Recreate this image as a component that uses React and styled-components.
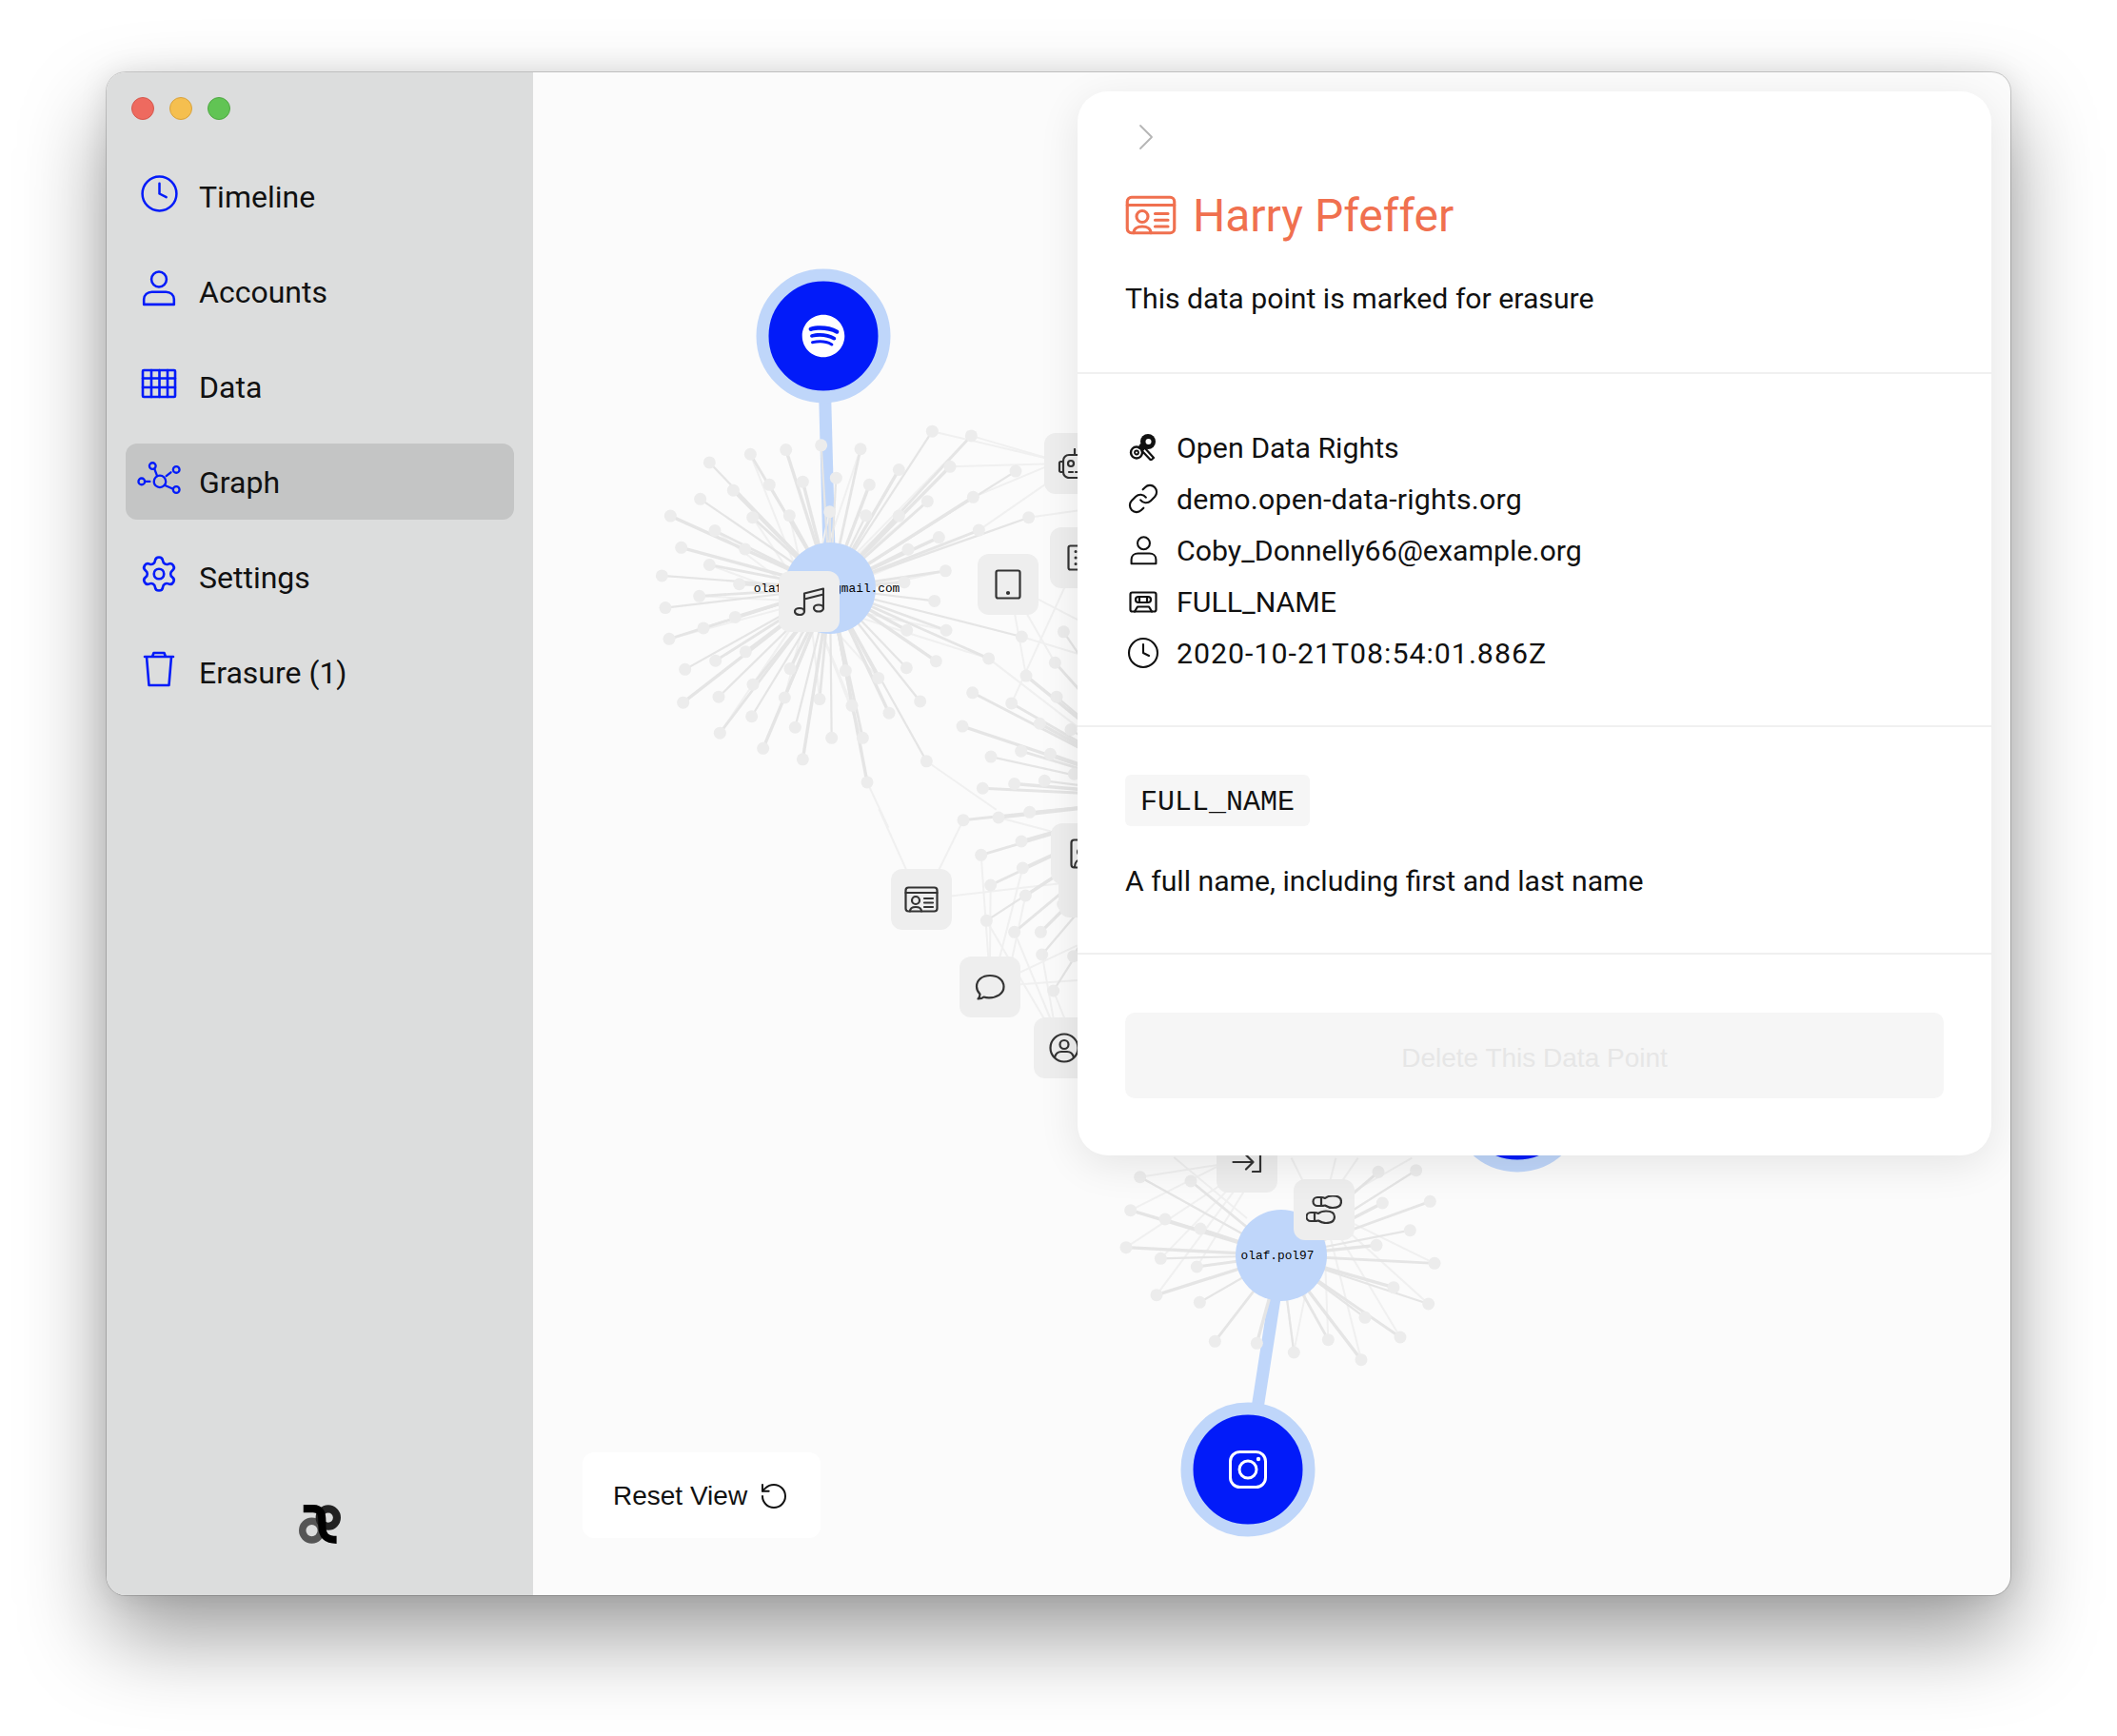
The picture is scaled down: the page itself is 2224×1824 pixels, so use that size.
import React from "react";
import styled, { createGlobalStyle } from "styled-components";
import { Settings, Link, RotateCcw, Clock } from "lucide-react";
import { FaSpotify } from "react-icons/fa";

const GlobalStyle = createGlobalStyle`
  html, body { margin: 0; padding: 0; background: #fff; }
  body { font-family: Roboto, "Noto Sans", Arial, sans-serif; color: #111; }
`;

const BLUE = "#021bf9";
const LIGHT = "#bfd6fa";

// the zoomed crops I read the graph from, converted back to page coords
const z2 = ([x, y]) => [660 + x / 3, 250 + y / 2.53];
const z5 = ([x, y]) => [900 + x / 3, 850 + y / 3];
const z6 = ([x, y]) => [1150 + x / 3, 1190 + y / 3];

const CENTER_A = [872, 618];
const CENTER_B = [1346, 1319];
const CENTER_C = [1235, 838];
const SPOTIFY = [865, 353];
const INSTAGRAM = [1311, 1544];
const HIDDEN = [1594, 1161];

const leavesA = [
  [256, 597], [385, 575], [497, 563], [608, 551], [732, 561], [853, 616], [958, 514], [1081, 526],
  [1014, 608], [1221, 620], [943, 700], [1087, 689], [1262, 743], [1105, 777], [979, 796], [882, 828],
  [1000, 885], [870, 915], [965, 965], [1002, 1043], [878, 1043], [1240, 1060], [1136, 1118], [970, 1125],
  [877, 1143], [788, 1170], [685, 1150], [920, 1232], [705, 1243], [822, 1263], [940, 1391], [739, 1329],
  [753, 1447], [641, 1329], [603, 1226], [550, 1386], [526, 1301], [493, 1222], [425, 1357], [389, 1272],
  [393, 1187], [510, 1145], [285, 1220], [289, 1316], [173, 1235], [179, 1147], [275, 1124], [370, 1100],
  [237, 1037], [129, 1066], [337, 1008], [117, 983], [224, 952], [350, 920], [106, 898], [256, 869],
  [167, 823], [368, 827], [273, 778], [133, 739], [227, 694], [392, 743], [331, 671], [445, 656],
  [508, 738], [550, 648], [655, 638], [635, 728], [760, 656], [749, 738], [853, 739],
].map(z2);

const leavesC = [
  ...[
    [1372, 1047], [1345, 1129], [1254, 1164], [1350, 1220], [1208, 1237], [1297, 1291], [1395, 1307],
    [1085, 1209], [1053, 1298], [1143, 1379], [1238, 1364], [1330, 1372], [1405, 1425], [1117, 1463],
    [1217, 1451], [1312, 1443],
  ].map(z2),
  ...[
    [336, 35], [447, 27], [545, 10], [392, 145], [519, 102], [523, 186], [422, 240], [532, 273],
    [409, 352], [497, 388], [580, 388], [584, 459], [650, 300], [683, 464], [620, 573],
  ].map(z5),
];

const leavesB = [
  [143, 140], [303, 153], [113, 245], [222, 273], [333, 303], [99, 362], [208, 397], [322, 423],
  [195, 512], [331, 535], [379, 658], [511, 664], [628, 693], [736, 653], [840, 716], [852, 583],
  [963, 645], [942, 488], [1052, 540], [1071, 412], [888, 355], [994, 308], [1057, 217], [907, 222],
  [1013, 119], [894, 124],
].map(z6);

const thinEdges = [
  [z2([958, 514]), z2([1340, 590])], [z2([1081, 526]), z2([1340, 590])], [z2([1014, 608]), z2([1340, 600])],
  [z2([1087, 689]), z2([1340, 600])], [z2([1105, 777]), z2([1340, 640])], [z2([1262, 743]), z2([1416, 725])],
  [z2([1216, 990]), z2([1254, 1164])], [z2([1250, 990]), z2([1345, 1129])], [z2([1380, 920]), z2([1208, 1237])],
  [z2([1290, 960]), z2([1416, 1015])], [z2([1240, 1060]), z2([1416, 1105])], [z2([940, 1391]), z2([1160, 1520])],
  [z2([753, 1447]), z2([820, 1568])], [z2([1136, 1118]), z2([1416, 1300])],
  [z5([70, 0]), z5([160, 200])], [z5([336, 35]), z5([255, 200])], [z5([290, 275]), z5([640, 235])],
  [z5([392, 145]), z5([415, 470])], [z5([422, 240]), z5([420, 470])], [z5([523, 186]), z5([450, 470])],
  [z5([532, 273]), z5([490, 470])], [z5([409, 352]), z5([590, 660])], [z5([497, 388]), z5([610, 660])],
  [z5([515, 515]), z5([695, 430])], [z5([515, 553]), z5([695, 540])], [z5([584, 459]), z5([620, 660])],
  [z5([620, 573]), z5([655, 660])], [z5([447, 27]), z5([610, 70])], [z5([519, 102]), z5([625, 70])],
  [z6([143, 140]), z6([400, 100])], [z6([113, 245]), z6([400, 100])], [z6([99, 362]), z6([420, 150])],
  [z6([208, 397]), z6([430, 170])], [z6([195, 512]), z6([450, 170])], [z6([322, 423]), z6([480, 170])],
  [z6([620, 80]), z6([700, 240])], [z6([760, 80]), z6([720, 240])], [z6([830, 80]), z6([720, 240])],
  [z6([1000, 80]), z6([720, 240])], [z6([1052, 540]), z6([720, 240])], [z6([963, 645]), z6([720, 240])],
  [z6([840, 716]), z6([720, 240])], [z6([736, 653]), z6([720, 240])], [z6([630, 680]), z6([700, 330])],
  [z6([1071, 412]), z6([720, 240])], [z6([250, 78]), z6([480, 270])],
  ...leavesA.filter((_, i) => i % 3 === 1).map((p) => [p, [850, 632]]),
  ...leavesB.filter((_, i) => i % 4 === 0).map((p) => [p, CENTER_B]),
];

const Page = styled.div`
  padding: 76px 112px 148px;
  min-height: 1824px;
  box-sizing: border-box;
`;
const Window = styled.div`
  display: flex;
  width: 2000px;
  height: 1600px;
  border-radius: 20px;
  overflow: hidden;
  background: #fbfbfb;
  box-shadow: 0 0 0 1px rgba(0, 0, 0, 0.16), 0 44px 90px rgba(0, 0, 0, 0.38), 0 0 30px rgba(0, 0, 0, 0.1);
`;
const Sidebar = styled.aside`
  display: flex;
  flex-direction: column;
  width: 448px;
  flex: none;
  box-sizing: border-box;
  padding: 26px 20px 54px;
  background: #dcdddd;
`;
const TrafficLights = styled.div`
  display: flex;
  gap: 16px;
  padding-left: 6px;
  margin-bottom: 40px;
`;
const Light = styled.span`
  width: 22px;
  height: 22px;
  border-radius: 50%;
  background: ${(p) => p.$color};
  border: 1px solid ${(p) => p.$edge};
`;
const Nav = styled.nav`
  display: flex;
  flex-direction: column;
  gap: 20px;
`;
const NavItem = styled.div`
  display: flex;
  align-items: center;
  gap: 19px;
  height: 80px;
  padding-left: 12px;
  box-sizing: border-box;
  border-radius: 12px;
  font-size: 32px;
  line-height: 38px;
  color: #111;
  background: ${(p) => (p.$active ? "#c4c5c5" : "transparent")};
`;
const NavLabel = styled.span`
  padding-top: 2px;
`;
const NavIcon = styled.span`
  display: flex;
  align-items: center;
  justify-content: center;
  width: 46px;
  height: 46px;
  margin-top: -6px;
  color: ${BLUE};
`;
const LogoMark = styled.div`
  margin-top: auto;
  display: flex;
  justify-content: center;
`;
const Canvas = styled.main`
  position: relative;
  flex: 1;
`;
const GraphSvg = styled.svg`
  position: absolute;
  left: 0;
  top: 0;
  width: 1552px;
  height: 1600px;
`;
const NodeLabel = styled.text`
  font-family: "Liberation Mono", monospace;
  font-size: 12.8px;
  fill: #000;
  text-anchor: middle;
  dominant-baseline: middle;
`;
const Tile = styled.div`
  position: absolute;
  left: ${(p) => p.$x - 560}px;
  top: ${(p) => p.$y - 76}px;
  width: 64px;
  height: 64px;
  display: flex;
  align-items: center;
  justify-content: center;
  border-radius: 12px;
  background: #eeeeee;
  color: #333;
`;
const ResetButton = styled.button`
  position: absolute;
  left: 52px;
  top: 1450px;
  display: flex;
  align-items: center;
  gap: 12px;
  width: 250px;
  height: 90px;
  box-sizing: border-box;
  padding: 2px 0 0 32px;
  border: 0;
  border-radius: 12px;
  background: #fff;
  font-family: "Liberation Sans", Arial, sans-serif;
  font-size: 28px;
  color: #111;
`;
const Panel = styled.section`
  position: absolute;
  top: 20px;
  right: 20px;
  width: 960px;
  border-radius: 32px;
  background: #fff;
  box-shadow: 0 10px 44px rgba(0, 0, 0, 0.09);
`;
const PanelSection = styled.div`
  padding: ${(p) => p.$pad};
  border-bottom: ${(p) => (p.$last ? "0" : "2px solid #f0f0f0")};
`;
const Chevron = styled.div`
  height: 32px;
  padding: 2px 0 0 14px;
  box-sizing: border-box;
  color: #b5b5b5;
`;
const Title = styled.h1`
  display: flex;
  align-items: center;
  gap: 17px;
  height: 56px;
  margin: 38px 0 -2px;
  font-size: 48px;
  font-weight: 400;
  color: #f0704f;
`;
const Lead = styled.p`
  margin: ${(p) => p.$top}px 0 0;
  font-size: 30.2px;
  line-height: 40px;
  color: #111;
`;
const MetaRow = styled.div`
  display: flex;
  align-items: center;
  gap: 16px;
  height: 54px;
  font-size: 30.3px;
  letter-spacing: ${(p) => p.$tracking || 0}px;
  color: #111;
`;
const MetaIcon = styled.span`
  display: flex;
  align-items: center;
  justify-content: center;
  width: 38px;
`;
const TypeTag = styled.code`
  display: inline-block;
  padding: 0 16px;
  height: 54px;
  line-height: 59px;
  border-radius: 6px;
  background: #f6f6f6;
  font-family: "Liberation Mono", monospace;
  font-size: 30px;
  color: #111;
`;
const TagRow = styled.div`
  display: flex;
`;
const DeleteButton = styled.button`
  display: block;
  width: 100%;
  height: 90px;
  padding-top: 6px;
  border: 0;
  border-radius: 10px;
  background: #f6f6f6;
  font-family: "Liberation Sans", Arial, sans-serif;
  font-size: 28px;
  color: #e6e6e6;
`;

const Glyph = ({ w = 32, h = 32, sw = 2.2, children }) => (
  <svg width={w} height={h} viewBox={`0 0 ${w} ${h}`} fill="none" stroke="currentColor" strokeWidth={sw} strokeLinecap="round" strokeLinejoin="round">
    {children}
  </svg>
);

const UserIcon = ({ size = 34, sw = 2.4 }) => (
  <svg width={size} height={size} viewBox="0 0 34 36" fill="none" stroke="currentColor" strokeWidth={sw} strokeLinejoin="round">
    <circle cx="17" cy="9" r="7.5" />
    <path d="M2 34v-5c0-4.5 3.5-7.5 8-7.5h14c4.5 0 8 3 8 7.5v5z" />
  </svg>
);

const TableIcon = () => (
  <Glyph w={38} h={32} sw={2.6}>
    <rect x="2" y="2" width="34" height="28" rx="1" />
    <path d="M2 10.5h34M2 20h34M11 2v28M19.500 2v28M28 2v28" />
  </Glyph>
);

const GraphIcon = () => (
  <Glyph w={48} h={38} sw={2.4}>
    <circle cx="5" cy="22" r="3.500" />
    <circle cx="17" cy="5" r="3.500" />
    <circle cx="43" cy="9" r="3.500" />
    <circle cx="43" cy="31" r="3.500" />
    <circle cx="25" cy="22" r="6.500" />
    <path d="M10 22h4M19 8l3 8M37 12l-5 4M30 26l9 4" />
  </Glyph>
);

const BinIcon = () => (
  <Glyph w={36} h={38} sw={2.6}>
    <path d="M3 6h30M5 6l2.500 30h21L31 6M11 6l1.500-4h11L25 6" />
  </Glyph>
);

const CardIcon = ({ w = 36, h = 28, sw = 2.2 }) => (
  <svg width={w} height={h} viewBox="0 0 36 28" fill="none" stroke="currentColor" strokeWidth={sw} strokeLinejoin="round" strokeLinecap="round">
    <rect x="1.500" y="1.500" width="33" height="25" rx="3" />
    <path d="M1.500 7h33M21 13h9M21 17.500h9M21 22h9" />
    <circle cx="12" cy="15" r="4" />
    <path d="M6 26.500c0-3 2.500-4.500 6-4.500s6 1.500 6 4.500" />
  </svg>
);

const TapeIcon = () => (
  <Glyph w={30} h={23} sw={2.2}>
    <rect x="1.500" y="1.500" width="27" height="20" rx="2" />
    <rect x="7" y="6" width="16" height="6" rx="3" />
    <path d="M11 6v6M19 6v6M6 21.500l3-5h12l3 5" />
  </Glyph>
);

const RightsLogo = () => (
  <svg width="30" height="28" viewBox="0 0 30 28" fill="none">
    <circle cx="8" cy="19.500" r="6" stroke="#111" strokeWidth="2.400" />
    <circle cx="8" cy="19.500" r="2" stroke="#111" strokeWidth="1.800" />
    <path d="M16 14l10 11-3 2.500L13 17" fill="#fff" stroke="#111" strokeWidth="2.200" strokeLinejoin="round" />
    <circle cx="20" cy="8" r="8" fill="#111" />
    <circle cx="20.500" cy="8" r="3" fill="#fff" />
    <path d="M12 10l-3 5 6 3 4-5z" fill="#111" />
  </svg>
);

const ChatIcon = () => (
  <Glyph w={32} h={28} sw={2.2}>
    <path d="M3.500 26.500c2.500 0 4.500-.5 6-2 1.500.5 3.500.8 5.500.8 8 0 15.500-4 15.500-11.500S24 2 16 2 2 6.500 2 13.500c0 3.500 1.500 6 3.500 8 0 2-.8 3.800-2 5z" />
  </Glyph>
);

const MusicIcon = () => (
  <Glyph w={32} h={30} sw={2.2}>
    <ellipse cx="6" cy="25.500" rx="5" ry="3.500" />
    <ellipse cx="26" cy="22" rx="5" ry="3.500" />
    <path d="M11 25.500V6.500L31 1.500V22M11 12.500l20-5" />
  </Glyph>
);

const TabletIcon = () => (
  <Glyph w={28} h={32} sw={2.2}>
    <rect x="1.500" y="1.500" width="25" height="29" rx="2" />
    <circle cx="14" cy="25" r="1" fill="currentColor" />
  </Glyph>
);

const RobotIcon = () => (
  <Glyph w={36} h={32} sw={2.2}>
    <path d="M18 7V1" />
    <rect x="6" y="7" width="28" height="24" rx="6" />
    <path d="M6 14H3.500A1.500 1.500 0 0 0 2 15.500v8A1.500 1.500 0 0 0 3.500 25H6" />
    <circle cx="14" cy="16" r="3" />
    <circle cx="26" cy="16" r="3" />
    <path d="M12 25h4M19 25h4M26 25h4" />
  </Glyph>
);

const KeypadIcon = () => (
  <Glyph w={28} h={28} sw={2.2}>
    <rect x="1.500" y="1.500" width="25" height="25" rx="2" />
    <path d="M9 7.500h.1M15 7.500h.1M21 7.500h.1M9 14h.1M15 14h.1M21 14h.1M9 20.500h.1M15 20.500h.1M21 20.500h.1" strokeWidth="3" />
  </Glyph>
);

const UserCircleIcon = () => (
  <Glyph w={32} h={32} sw={2.2}>
    <circle cx="16" cy="16" r="14.500" />
    <circle cx="16" cy="12.500" r="4.500" />
    <path d="M6 26c1-4 4-6 7-6h6c3 0 6 2 7 6" />
  </Glyph>
);

const BadgeIcon = () => (
  <Glyph w={24} h={32} sw={2.2}>
    <rect x="1.500" y="1.500" width="21" height="29" rx="3" />
    <circle cx="12" cy="14" r="4" />
    <path d="M5 30c0-5 3-8 7-8s7 3 7 8" />
  </Glyph>
);

const ArrowInIcon = () => (
  <Glyph w={32} h={22} sw={2.2}>
    <path d="M1.500 11h21M15 3.500l7.500 7.500-7.500 7.500M30 1v20h-8" />
  </Glyph>
);

const SHOE = "M16 2h-4a4.500 4.500 0 0 0 0 9h4q2 0 4-.5q4 2.500 8 2.500c5 0 9-2 9-6.500s-4-6-9-6q-5 0-8 2.500q-2-1-4-1zM16 2v9";

const FeetIcon = () => (
  <Glyph w={38} h={30} sw={2.2}>
    <path d={SHOE} />
    <g transform="translate(-7 16)">
      <path d={SHOE} />
    </g>
  </Glyph>
);

const AeLogo = () => (
  <svg width="44" height="41" viewBox="0 0 130 121" fill="none">
    <circle cx="40" cy="80" r="29" stroke="#555" strokeWidth="22" />
    <circle cx="91" cy="40" r="27" stroke="#222" strokeWidth="24" />
    <path d="M14 12h30c24 0 28 16 28 40v14c0 30 12 43 45 43" stroke="#000" strokeWidth="24" />
  </svg>
);

const InstagramGlyph = ({ cx, cy }) => (
  <g transform={`translate(${cx - 20} ${cy - 20})`} fill="none" stroke="#fff" strokeWidth="3">
    <rect x="1.500" y="1.500" width="37" height="37" rx="10" />
    <circle cx="20" cy="20" r="9" />
    <circle cx="31" cy="9" r="2.200" fill="#fff" stroke="none" />
  </g>
);

const SpotifyGlyph = ({ cx, cy }) => (
  <g transform={`translate(${cx - 23} ${cy - 23})`}>
    <FaSpotify size={46} color="#fff" />
  </g>
);

const navItems = [
  { label: "Timeline", icon: <Clock size={43} strokeWidth={1.400} /> },
  { label: "Accounts", icon: <UserIcon size={38} /> },
  { label: "Data", icon: <TableIcon /> },
  { label: "Graph", icon: <GraphIcon />, active: true },
  { label: "Settings", icon: <Settings size={42} strokeWidth={1.500} /> },
  { label: "Erasure (1)", icon: <BinIcon /> },
];

const metaRows = [
  { text: "Open Data Rights", icon: <RightsLogo /> },
  { text: "demo.open-data-rights.org", icon: <Link size={34} strokeWidth={1.500} />, tracking: 0.2 },
  { text: "Coby_Donnelly66@example.org", icon: <UserIcon size={31} sw={2.400} /> },
  { text: "FULL_NAME", icon: <TapeIcon /> },
  { text: "2020-10-21T08:54:01.886Z", icon: <Clock size={36} strokeWidth={1.400} />, tracking: 1 },
];

const tiles = [
  { x: 818, y: 600, icon: <MusicIcon /> },
  { x: 1027, y: 582, icon: <TabletIcon /> },
  { x: 1097, y: 455, icon: <RobotIcon /> },
  { x: 1103, y: 554, icon: <KeypadIcon /> },
  { x: 1112, y: 900, icon: null },
  { x: 1104, y: 865, icon: <BadgeIcon /> },
  { x: 936, y: 913, icon: <CardIcon /> },
  { x: 1008, y: 1005, icon: <ChatIcon /> },
  { x: 1086, y: 1069, icon: <UserCircleIcon /> },
  { x: 1278, y: 1189, icon: <ArrowInIcon /> },
  { x: 1359, y: 1239, icon: <FeetIcon /> },
];

const Spoke = ({ from, to, i }) => (
  <line x1={from[0]} y1={from[1]} x2={to[0]} y2={to[1]} stroke="#e5e5e5" strokeWidth={2.200 + (i % 3) * 0.6} />
);

function Graph() {
  return (
    <GraphSvg viewBox="560 76 1552 1600">
      <line x1={SPOTIFY[0]} y1={SPOTIFY[1]} x2={CENTER_A[0]} y2={CENTER_A[1]} stroke={LIGHT} strokeWidth="13" />
      <line x1={INSTAGRAM[0]} y1={INSTAGRAM[1]} x2={CENTER_B[0]} y2={CENTER_B[1]} stroke={LIGHT} strokeWidth="13" />
      {thinEdges.map(([a, b], i) => (
        <line key={i} x1={a[0]} y1={a[1]} x2={b[0]} y2={b[1]} stroke="#f0f0f0" strokeWidth="2" />
      ))}
      {leavesA.map((p, i) => <Spoke key={i} from={p} to={CENTER_A} i={i} />)}
      {leavesB.map((p, i) => <Spoke key={i} from={p} to={CENTER_B} i={i} />)}
      {leavesC.map((p, i) => <Spoke key={i} from={p} to={CENTER_C} i={i} />)}
      {[...leavesA, ...leavesB, ...leavesC].map((p, i) => (
        <circle key={i} cx={p[0]} cy={p[1]} r="6.500" fill="#ececec" />
      ))}
      <circle cx={CENTER_A[0]} cy={CENTER_A[1]} r="48" fill={LIGHT} />
      <circle cx={CENTER_B[0]} cy={CENTER_B[1]} r="48" fill={LIGHT} />
      {[SPOTIFY, INSTAGRAM, HIDDEN].map((c) => (
        <circle key={c[0]} cx={c[0]} cy={c[1]} r="64" fill={BLUE} stroke={LIGHT} strokeWidth="13" />
      ))}
      <SpotifyGlyph cx={SPOTIFY[0]} cy={SPOTIFY[1]} />
      <InstagramGlyph cx={INSTAGRAM[0]} cy={INSTAGRAM[1]} />
      <NodeLabel x={868.500} y={619}>olaf.pol97@gmail.com</NodeLabel>
      <NodeLabel x={1342} y={1320}>olaf.pol97</NodeLabel>
    </GraphSvg>
  );
}

export default function App() {
  return (
    <Page>
      <GlobalStyle />
      <Window>
        <Sidebar>
          <TrafficLights>
            <Light $color="#ee6a5f" $edge="#d5574d" />
            <Light $color="#f5bf4f" $edge="#d9a23b" />
            <Light $color="#61c454" $edge="#4fa842" />
          </TrafficLights>
          <Nav>
            {navItems.map((item) => (
              <NavItem key={item.label} $active={item.active}>
                <NavIcon>{item.icon}</NavIcon>
                <NavLabel>{item.label}</NavLabel>
              </NavItem>
            ))}
          </Nav>
          <LogoMark>
            <AeLogo />
          </LogoMark>
        </Sidebar>
        <Canvas>
          <Graph />
          {tiles.map((t) => (
            <Tile key={`${t.x}-${t.y}`} $x={t.x} $y={t.y}>{t.icon}</Tile>
          ))}
          <ResetButton>
            Reset View
            <RotateCcw size={32} strokeWidth={1.500} />
          </ResetButton>
          <Panel>
            <PanelSection $pad="32px 50px 57px">
              <Chevron>
                <Glyph w={16} h={28} sw={1.800}>
                  <path d="M2 2l12 12L2 26" />
                </Glyph>
              </Chevron>
              <Title>
                <CardIcon w={54} h={42} sw={2.100} />
                Harry Pfeffer
              </Title>
              <Lead $top={42}>This data point is marked for erasure</Lead>
            </PanelSection>
            <PanelSection $pad="50px 50px 49px">
              {metaRows.map((row) => (
                <MetaRow key={row.text} $tracking={row.tracking}>
                  <MetaIcon>{row.icon}</MetaIcon>
                  {row.text}
                </MetaRow>
              ))}
            </PanelSection>
            <PanelSection $pad="50px 50px 55px">
              <TagRow>
                <TypeTag>FULL_NAME</TypeTag>
              </TagRow>
              <Lead $top={38}>A full name, including first and last name</Lead>
            </PanelSection>
            <PanelSection $pad="61px 50px 60px" $last>
              <DeleteButton>Delete This Data Point</DeleteButton>
            </PanelSection>
          </Panel>
        </Canvas>
      </Window>
    </Page>
  );
}
